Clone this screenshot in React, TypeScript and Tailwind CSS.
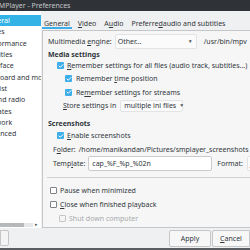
import { Check } from "lucide-react"

const pages = [
    "General",
    "Drives",
    "Performance",
    "Subtitles",
    "Interface",
    "Keyboard and mouse",
    "Playlist",
    "TV and radio",
    "Updates",
    "Network",
    "Advanced",
]

function Box({ checked = false, disabled = false }: { checked?: boolean; disabled?: boolean }) {
    if (checked) {
        return (
            <span className="w-[7px] h-[7px] rounded-[1px] bg-[#3daee9] flex items-center justify-center shrink-0">
                <Check size={6} strokeWidth={4} className="text-white" />
            </span>
        )
    }
    return (
        <span
            className={`w-[7px] h-[7px] rounded-[1px] border shrink-0 ${
                disabled ? "border-[#c4c6c8] bg-[#f4f4f4]" : "border-[#7e8286] bg-white"
            }`}
        />
    )
}

export default function App() {
    return (
        <div className="w-[250px] h-[250px] overflow-hidden flex flex-col bg-[#eff0f1] text-[#31363b] text-[7px] leading-none font-['Noto_Sans',sans-serif]">
            {/* Title bar */}
            <div className="h-[11px] shrink-0 bg-[#2f3338] text-[#c3c6c9] flex items-center whitespace-nowrap">
                <span className="ml-[-5px]">SMPlayer - Preferences</span>
            </div>

            <div className="flex-1 flex min-h-0">
                {/* Section list */}
                <div className="w-[41px] shrink-0 bg-white flex flex-col overflow-hidden">
                    <div className="pt-[4px] flex flex-col">
                        {pages.map((p, i) => (
                            <div
                                key={p}
                                className={`h-[11.3px] flex items-center whitespace-nowrap ${
                                    i === 0 ? "bg-[#33b3e6] text-white" : ""
                                }`}
                            >
                                <span className="ml-[-16px]">{p}</span>
                            </div>
                        ))}
                    </div>
                    <div className="mt-auto mb-[1px] h-[5px] flex items-center">
                        <div className="w-[24px] h-[4px] bg-[#b6b9bc]" />
                        <div className="w-[9px] h-[4px] bg-[#e6e7e8]" />
                        <span className="ml-[2px] text-[5px] text-[#555]">▸</span>
                    </div>
                </div>

                {/* Main panel */}
                <div className="flex-1 min-w-0 flex flex-col pl-[1px]">
                    {/* Tabs */}
                    <div className="h-[19px] shrink-0 flex items-end whitespace-nowrap">
                        <div className="h-[14px] px-[2px] flex flex-col justify-center relative">
                            <span>
                                <u>G</u>eneral
                            </span>
                            <span className="absolute left-0 right-0 bottom-[1px] h-[2px] bg-[#3daee9]" />
                        </div>
                        <div className="h-[14px] ml-[4px] px-[2px] flex items-center">
                            <u>V</u>ideo
                        </div>
                        <div className="h-[14px] ml-[4px] px-[2px] flex items-center">
                            A<u>u</u>dio
                        </div>
                        <div className="h-[14px] ml-[4px] px-[2px] flex items-center">
                            Preferre<u>d</u> audio and subtitles
                        </div>
                    </div>

                    <div className="flex-1 border-l border-t border-b border-[#c4c6c8] bg-[#f6f6f7] pl-[5px] pt-[3px] whitespace-nowrap">
                        {/* Engine */}
                        <div className="h-[15px] flex items-center">
                            <span className="shrink-0">
                                Multimedia <u>e</u>ngine:
                            </span>
                            <div className="ml-[3px] w-[82px] h-[15px] shrink-0 bg-[#fbfbfb] border border-[#e2e3e4] rounded-[2px] flex items-center pl-[2px] pr-[3px]">
                                <span>Other...</span>
                                <span className="ml-auto text-[5px] text-[#555]">▼</span>
                            </div>
                            <span className="ml-[7px]">/usr/bin/mpv</span>
                        </div>

                        <div className="h-[10px] flex items-center font-bold">Media settings</div>

                        <div className="pl-[9px]">
                            <div className="h-[13.3px] flex items-center gap-[3px]">
                                <Box checked />
                                <span>
                                    <u>R</u>emember settings for all files (audio track, subtitles...)
                                </span>
                            </div>
                            <div className="h-[13.3px] flex items-center gap-[4px] pl-[8px]">
                                <Box checked />
                                <span>
                                    Remember <u>t</u>ime position
                                </span>
                            </div>
                            <div className="h-[13.3px] flex items-center gap-[4px] pl-[8px]">
                                <Box checked />
                                <span>
                                    Re<u>m</u>ember settings for streams
                                </span>
                            </div>
                            <div className="h-[13.3px] flex items-center pl-[6px]">
                                <span className="shrink-0">
                                    <u>S</u>tore settings in
                                </span>
                                <div className="ml-[4px] h-[12px] w-[63px] shrink-0 bg-[#fbfbfb] border border-[#e2e3e4] rounded-[2px] flex items-center px-[3px]">
                                    <span>multiple ini files</span>
                                    <span className="ml-[3px] text-[5px] text-[#555]">▼</span>
                                </div>
                            </div>
                        </div>

                        <div className="h-[12px] mt-[5px] flex items-center font-bold">Screenshots</div>

                        <div className="pl-[9px]">
                            <div className="h-[13px] flex items-center gap-[3px]">
                                <Box checked />
                                <span>
                                    <u>E</u>nable screenshots
                                </span>
                            </div>
                            <div className="h-[14px] flex items-center ml-[-4px]">
                                <span className="shrink-0">
                                    F<u>o</u>lder:
                                </span>
                                <span className="ml-[3px]">/home/manikandan/Pictures/smplayer_screenshots</span>
                            </div>
                            <div className="h-[15px] flex items-center ml-[-4px]">
                                <span className="shrink-0">
                                    Temp<u>l</u>ate:
                                </span>
                                <div className="ml-[3px] w-[124px] h-[15px] shrink-0 bg-white border border-[#c9cbcd] rounded-[2px] flex items-center pl-[3px]">
                                    cap_%F_%p_%02n
                                </div>
                                <span className="ml-[5px] shrink-0">Format:</span>
                                <div className="ml-[4px] w-[20px] h-[15px] shrink-0 bg-[#fbfbfb] border border-[#e2e3e4] rounded-[2px] flex items-center pl-[2px]">
                                    jpg
                                </div>
                            </div>
                        </div>

                        <div className="mt-[6px] ml-[-1px] h-px bg-[#cfd1d3]" />

                        <div className="pt-[6px] pl-[2px]">
                            <div className="h-[13.5px] flex items-center gap-[3px]">
                                <Box />
                                <span>Pause when minimized</span>
                            </div>
                            <div className="h-[14px] flex items-center gap-[3px]">
                                <Box />
                                <span>
                                    <u>C</u>lose when finished playback
                                </span>
                            </div>
                            <div className="h-[13.5px] flex items-center gap-[3px] pl-[9px] text-[#a6a9ac]">
                                <Box disabled />
                                <span>Shut down computer</span>
                            </div>
                        </div>
                    </div>
                </div>
            </div>

            {/* Buttons */}
            <div className="h-[20px] shrink-0 flex items-center">
                <div className="w-[9px] h-[16px] border border-[#c4c6c8] bg-[#f4f4f5] rounded-r-[2px]" />
                <div className="ml-auto flex">
                    <div className="w-[42px] h-[17px] border border-[#c4c6c8] bg-[#f7f7f7] rounded-[2px] flex items-center justify-center">
                        Apply
                    </div>
                    <div className="ml-[1px] w-[38px] h-[17px] border border-[#c4c6c8] bg-[#f7f7f7] rounded-l-[2px] flex items-center justify-center">
                        <u>C</u>ancel
                    </div>
                </div>
            </div>
            <div className="h-[2px] shrink-0 bg-[#5a5e62]" />
        </div>
    )
}
